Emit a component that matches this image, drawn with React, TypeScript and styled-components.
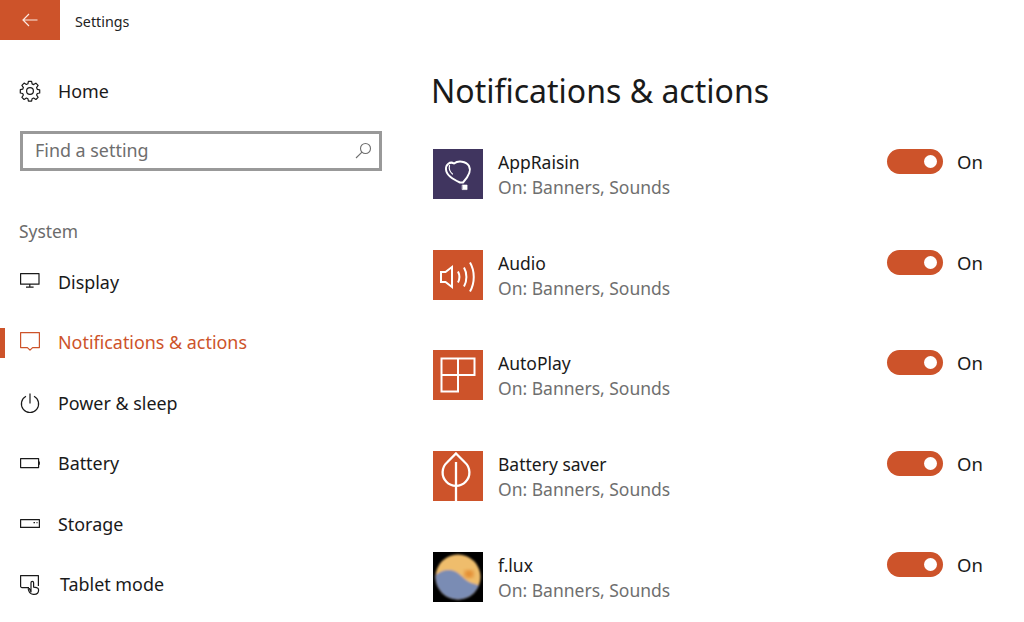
import React from 'react';
import styled, { createGlobalStyle } from 'styled-components';

const ACCENT = '#cd532a';

const GlobalStyle = createGlobalStyle`
  html, body {
    margin: 0;
    padding: 0;
    background: #fff;
    overflow: hidden;
  }
  body {
    font-family: "Noto Sans", "Open Sans", sans-serif;
    color: #1a1a1a;
  }
`;

const Page = styled.div`
  width: 1024px;
  height: 622px;
  overflow: hidden;
  display: flex;
  flex-direction: column;
`;

const TitleBar = styled.header`
  display: flex;
  align-items: center;
  height: 40px;
  flex-shrink: 0;
`;

const BackButton = styled.div`
  display: flex;
  align-items: center;
  justify-content: center;
  width: 60px;
  height: 40px;
  background: ${ACCENT};
`;

const TitleText = styled.span`
  margin: 2px 0 0 15px;
  font-size: 14.3px;
  color: #222;
`;

const Body = styled.div`
  display: flex;
  flex: 1;
  min-height: 0;
`;

const Sidebar = styled.nav`
  width: 431px;
  flex-shrink: 0;
  padding-top: 21px;
  box-sizing: border-box;
`;

const NavRow = styled.div<{ $active?: boolean }>`
  position: relative;
  display: flex;
  align-items: center;
  gap: 18px;
  height: 60.4px;
  padding-left: 20px;
  padding-bottom: 1px;
  box-sizing: border-box;
  font-size: 17.9px;
  color: ${({ $active }) => ($active ? ACCENT : '#1a1a1a')};

  ${({ $active }) =>
    $active &&
    `&::before {
      content: '';
      position: absolute;
      left: 0;
      top: 15px;
      width: 5px;
      height: 30px;
      background: ${ACCENT};
    }`}
`;

const NavIcon = styled.svg`
  width: 20px;
  height: 20px;
  flex-shrink: 0;
  fill: none;
  stroke: currentColor;
  stroke-width: 1.2;
  stroke-linejoin: round;
  overflow: visible;
`;

const TabletNavIcon = styled(NavIcon)`
  margin-right: 2px;
`;

const SearchBox = styled.div`
  display: flex;
  align-items: center;
  justify-content: space-between;
  box-sizing: border-box;
  width: 362px;
  height: 40px;
  margin: 10px 0 0 20px;
  padding: 0 7px 2px 12px;
  border: 3px solid #999;
  font-size: 17.9px;
  color: #6e6e6e;
`;

const SectionLabel = styled.div`
  height: 30px;
  line-height: 30px;
  margin: 45px 0 6px 19px;
  font-size: 17.4px;
  color: #6b6b6b;
`;

const Content = styled.main`
  flex: 1;
  min-width: 0;
`;

const Heading = styled.h1`
  margin: 26px 0 33px;
  font-size: 32px;
  line-height: 50px;
  font-weight: 400;
  color: #1a1a1a;
`;

const AppList = styled.div`
  display: flex;
  flex-direction: column;
  gap: 50.7px;
  padding-left: 2px;
`;

const AppRow = styled.div`
  display: flex;
  align-items: center;
  height: 50px;
`;

const AppIcon = styled.div<{ $bg: string }>`
  width: 50px;
  height: 50px;
  flex-shrink: 0;
  background: ${({ $bg }) => $bg};

  svg {
    display: block;
    width: 50px;
    height: 50px;
  }
`;

const AppText = styled.div`
  margin-left: 15px;
  flex: 1;
  align-self: flex-start;
`;

const AppName = styled.div`
  font-size: 17.5px;
  line-height: 25px;
  margin-top: 1px;
  color: #1a1a1a;
`;

const AppStatus = styled.div`
  font-size: 17.5px;
  line-height: 25px;
  color: #6f6f6f;
`;

const ToggleWrap = styled.div`
  display: flex;
  align-items: flex-start;
  align-self: flex-start;
  width: 137px;
  flex-shrink: 0;
`;

const Track = styled.div`
  display: flex;
  align-items: center;
  justify-content: flex-end;
  box-sizing: border-box;
  width: 56px;
  height: 25px;
  padding-right: 6px;
  border-radius: 13px;
  background: ${ACCENT};
`;

const Knob = styled.span`
  width: 13px;
  height: 13px;
  border-radius: 50%;
  background: #fff;
`;

const ToggleLabel = styled.span`
  margin-left: 14px;
  font-size: 18.5px;
  line-height: 25px;
  color: #1a1a1a;
`;

const GearIcon = () => (
  <NavIcon viewBox="0 0 20 20">
    <circle cx="10" cy="10" r="3.4" />
    <path d="M8.400 .7h3.200l.5 2.600 1.500.7 2.300-1.400 2.200 2.200-1.500 2.300.7 1.600 2.400.5v3.200l-2.400.5-.7 1.500 1.500 2.300-2.200 2.200-2.300-1.500-1.500.7-.5 2.400H8.400l-.5-2.400-1.500-.7-2.300 1.500-2.200-2.200 1.500-2.300-.7-1.500-2.400-.5V9.100l2.400-.5.7-1.600L1.900 4.700l2.200-2.200 2.300 1.400 1.500-.7z" transform="translate(0 -.4)" />
  </NavIcon>
);

const DisplayIcon = () => (
  <NavIcon viewBox="0 0 20 20">
    <path d="M.6 1.600h18.400v10.600H.6zM9.800 12.200v2.800M6 15.200h7.600" />
  </NavIcon>
);

const BubbleIcon = () => (
  <NavIcon viewBox="0 0 20 20">
    <path d="M.6 .6h18.800v15h-6.800l-2.600 2.600-2.600-2.600H.6z" />
  </NavIcon>
);

const PowerIcon = () => (
  <NavIcon viewBox="0 0 20 20">
    <path d="M6 3.300a8.600 8.600 0 1 0 8 0M10 .6v10" />
  </NavIcon>
);

const BatteryIcon = () => (
  <NavIcon viewBox="0 0 20 20">
    <path d="M.6 5.600h18v9H.6zM19.300 8.500v3.200" />
  </NavIcon>
);

const StorageIcon = () => (
  <NavIcon viewBox="0 0 20 20">
    <path d="M.6 5.600h18.800v7.800H.6zM13.500 8.600h1.500M16.500 8.600h1" />
  </NavIcon>
);

const TabletIcon = () => (
  <TabletNavIcon viewBox="0 0 20 20">
    <path d="M9 13.600H2a1.400 1.400 0 0 1-1.400-1.400V1.600h17.800v10.300" />
    <path d="M11.400 17V7.800a1.300 1.300 0 0 1 2.600 0v4.400l3 .6c1.400.3 2 1 2 2.200 0 2.700-1.900 4.400-4.400 4.400h-1c-2.100 0-3.600-1.300-4.400-3.400l-.6-2 1.200-.4z" transform="translate(-.4 .9)" fill="#fff" />
  </TabletNavIcon>
);

const SearchIcon = () => (
  <svg width="17" height="17" viewBox="0 0 17 17" fill="none" stroke="#6e6e6e" strokeWidth="1.100">
    <circle cx="10.500" cy="6.500" r="5" />
    <path d="M7 10.200 1 16" />
  </svg>
);

const AppRaisinArt = () => (
  <svg viewBox="0 0 50 50" fill="none" stroke="#fff" strokeWidth="2" strokeLinejoin="round" strokeLinecap="round">
    <path d="M27 33.500C20 30 13.500 26.500 13 20.500 12.600 15.500 17 12 21 14.500 25 11.500 33 12 36 17c2.300 4.200-.5 10.500-6 16.500z" />
    <path d="M16.500 16.500c-.8 3.500.5 6.500 3 8.500" strokeWidth="1.200" />
    <rect x="29.500" y="36" width="4.600" height="4.600" fill="#fff" strokeWidth="0.600" />
  </svg>
);

const AudioArt = () => (
  <svg viewBox="0 0 50 50" fill="none" stroke="#fff" strokeWidth="2">
    <path d="M8 22h4.500L19 17v20l-6.500-5H8z" />
    <path d="M25 21.500c1.800 3.500 1.800 7.500 0 11" />
    <path d="M31 17.500c3.200 5.500 3.200 13.500 0 19" />
    <path d="M37 12.500c5 8.500 5 20.500 0 29" />
  </svg>
);

const AutoPlayArt = () => (
  <svg viewBox="0 0 50 50" fill="none" stroke="#fff" strokeWidth="2">
    <path d="M8.500 8.500h33v16.500H25v16.500H8.500zM25 8.500V25H8.500" />
  </svg>
);

const LeafArt = () => (
  <svg viewBox="0 0 50 50" fill="none" stroke="#fff" strokeWidth="2.300">
    <path d="M23 2.500 32 11.500a13.400 13.400 0 1 1-18 0z" />
    <path d="M23 11v39" />
  </svg>
);

const FluxArt = () => (
  <svg viewBox="0 0 50 50">
    <defs>
      <clipPath id="flux-disc">
        <circle cx="25" cy="25" r="22.500" />
      </clipPath>
      <filter id="flux-soft">
        <feGaussianBlur stdDeviation="0.800" />
      </filter>
      <filter id="flux-sun">
        <feGaussianBlur stdDeviation="2" />
      </filter>
    </defs>
    <rect width="50" height="50" fill="#000" />
    <g filter="url(#flux-soft)">
      <g clipPath="url(#flux-disc)">
        <rect width="50" height="50" fill="#efbd6c" />
        <ellipse cx="36" cy="22" rx="5" ry="4" fill="#e2872c" filter="url(#flux-sun)" />
        <path d="M0 26c5-6 11-8.500 17-8 7 .6 11 6 16 10 3 2.400 7 4 17 6v16H0z" fill="#7a8cb4" />
      </g>
    </g>
  </svg>
);

const apps = [
  { name: 'AppRaisin', bg: '#40355f', art: <AppRaisinArt /> },
  { name: 'Audio', bg: ACCENT, art: <AudioArt /> },
  { name: 'AutoPlay', bg: ACCENT, art: <AutoPlayArt /> },
  { name: 'Battery saver', bg: ACCENT, art: <LeafArt /> },
  { name: 'f.lux', bg: '#000', art: <FluxArt /> },
];

const navItems = [
  { label: 'Display', icon: <DisplayIcon /> },
  { label: 'Notifications & actions', icon: <BubbleIcon />, active: true },
  { label: 'Power & sleep', icon: <PowerIcon /> },
  { label: 'Battery', icon: <BatteryIcon /> },
  { label: 'Storage', icon: <StorageIcon /> },
  { label: 'Tablet mode', icon: <TabletIcon /> },
];

export default function App() {
  return (
    <Page>
      <GlobalStyle />
      <TitleBar>
        <BackButton>
          <svg width="16" height="14" viewBox="0 0 16 14" fill="none" stroke="#fbe9e2" strokeWidth="1.200">
            <path d="M15.500 7H1M7 1 1 7l6 6" />
          </svg>
        </BackButton>
        <TitleText>Settings</TitleText>
      </TitleBar>
      <Body>
        <Sidebar>
          <NavRow>
            <GearIcon />
            Home
          </NavRow>
          <SearchBox>
            Find a setting
            <SearchIcon />
          </SearchBox>
          <SectionLabel>System</SectionLabel>
          {navItems.map((item) => (
            <NavRow key={item.label} $active={item.active}>
              {item.icon}
              {item.label}
            </NavRow>
          ))}
        </Sidebar>
        <Content>
          <Heading>Notifications &amp; actions</Heading>
          <AppList>
            {apps.map((app) => (
              <AppRow key={app.name}>
                <AppIcon $bg={app.bg}>{app.art}</AppIcon>
                <AppText>
                  <AppName>{app.name}</AppName>
                  <AppStatus>On: Banners, Sounds</AppStatus>
                </AppText>
                <ToggleWrap>
                  <Track>
                    <Knob />
                  </Track>
                  <ToggleLabel>On</ToggleLabel>
                </ToggleWrap>
              </AppRow>
            ))}
          </AppList>
        </Content>
      </Body>
    </Page>
  );
}
